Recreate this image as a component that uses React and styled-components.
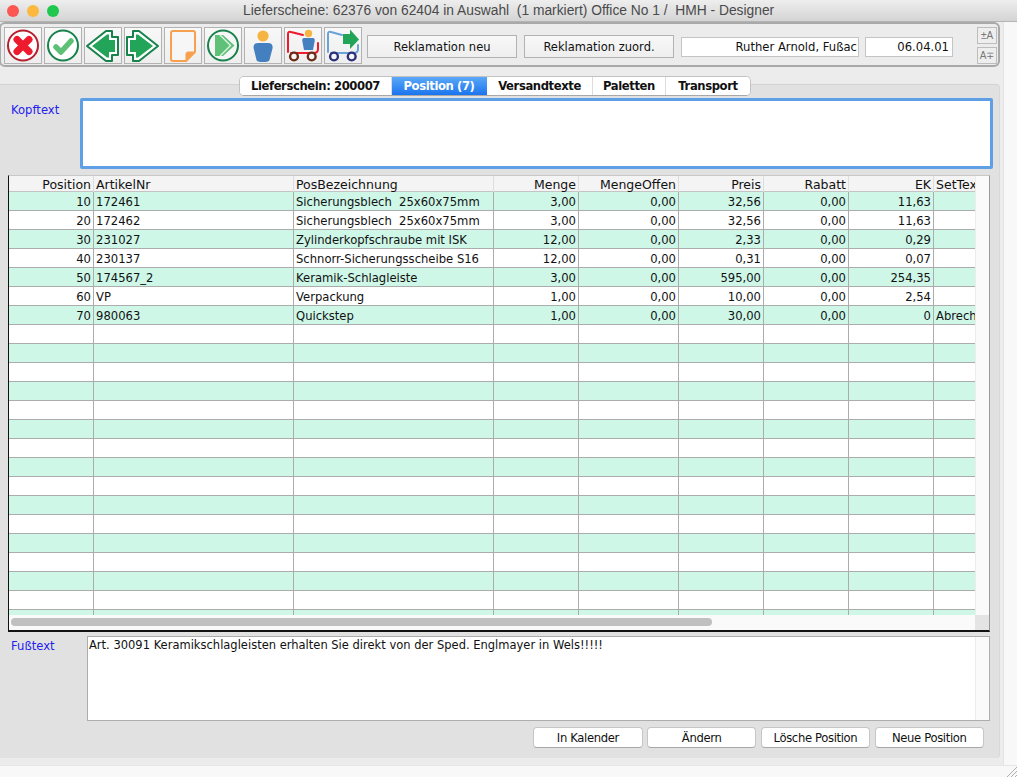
import styled, { createGlobalStyle } from 'styled-components'

const uiFont = `"DejaVu Sans", Verdana, sans-serif`

const GlobalStyle = createGlobalStyle`
  html, body {
    margin: 0;
    padding: 0;
    background: #f8f8f8;
  }
  * { box-sizing: border-box; }
`

const columns = [
  { title: 'Position', align: 'right' },
  { title: 'ArtikelNr', align: 'left' },
  { title: 'PosBezeichnung', align: 'left' },
  { title: 'Menge', align: 'right' },
  { title: 'MengeOffen', align: 'right' },
  { title: 'Preis', align: 'right' },
  { title: 'Rabatt', align: 'right' },
  { title: 'EK', align: 'right' },
  { title: 'SetText', align: 'left' },
]

const positions = [
  ['10', '172461', 'Sicherungsblech  25x60x75mm', '3,00', '0,00', '32,56', '0,00', '11,63', ''],
  ['20', '172462', 'Sicherungsblech  25x60x75mm', '3,00', '0,00', '32,56', '0,00', '11,63', ''],
  ['30', '231027', 'Zylinderkopfschraube mit ISK', '12,00', '0,00', '2,33', '0,00', '0,29', ''],
  ['40', '230137', 'Schnorr-Sicherungsscheibe S16', '12,00', '0,00', '0,31', '0,00', '0,07', ''],
  ['50', '174567_2', 'Keramik-Schlagleiste', '3,00', '0,00', '595,00', '0,00', '254,35', ''],
  ['60', 'VP', 'Verpackung', '1,00', '0,00', '10,00', '0,00', '2,54', ''],
  ['70', '980063', 'Quickstep', '1,00', '0,00', '30,00', '0,00', '0', 'Abrechnung'],
]

const emptyRow = ['', '', '', '', '', '', '', '', '']
const rows = [...positions, ...Array(16).fill(emptyRow)]

const tabs = [
  { label: 'Lieferschein: 200007', width: 152 },
  { label: 'Position (7)', width: 95, active: true },
  { label: 'Versandtexte', width: 106 },
  { label: 'Paletten', width: 73 },
  { label: 'Transport', width: 84 },
]

const arrowOuter = '3,19 22,4 28,4 28,10 34,10 34,28 28,28 28,34 22,34'
const arrowInner = '8,19 23,7.5 25,7.5 25,13 31,13 31,25 25,25 25,30.5 23,30.5'

// the svg starts inside the button border, so the viewBox keeps button coordinates
const ToolIcon = ({ children }) => (
  <svg width="36" height="35" viewBox="1 1 36 35">{children}</svg>
)

const CancelIcon = () => (
  <ToolIcon>
    <circle cx="19" cy="18.5" r="15" fill="#fff" stroke="#b5202f" strokeWidth="2" />
    <path d="M13 12.5 L25 24.5 M25 12.5 L13 24.5" stroke="#ee1b2e" strokeWidth="7" strokeLinecap="round" />
  </ToolIcon>
)

const OkIcon = () => (
  <ToolIcon>
    <circle cx="19" cy="18.5" r="15" fill="#fff" stroke="#17824c" strokeWidth="2" />
    <path d="M12 20 L17 25 L27 14" fill="none" stroke="#5cc076" strokeWidth="5.5" strokeLinecap="round" strokeLinejoin="round" />
  </ToolIcon>
)

const ArrowIcon = ({ flip }) => (
  <ToolIcon>
    <g transform={flip ? 'matrix(-1 0 0 1 37 0)' : undefined}>
      <polygon points={arrowOuter} fill="#fff" stroke="#17824c" strokeWidth="2" strokeLinejoin="round" />
      <polygon points={arrowInner} fill="#22a559" />
    </g>
  </ToolIcon>
)

const NoteIcon = () => (
  <ToolIcon>
    <path d="M9 4 H29 Q31 4 31 6 V25 L22 34 H9 Q7 34 7 32 V6 Q7 4 9 4 Z" fill="#f6f6f6" stroke="#f7a04e" strokeWidth="2" strokeLinejoin="round" />
    <path d="M31 25 L22 34 V27 Q22 25 24 25 Z" fill="#f7a04e" stroke="#f7a04e" strokeWidth="1" strokeLinejoin="round" />
  </ToolIcon>
)

const ForwardIcon = () => (
  <ToolIcon>
    <circle cx="19" cy="18.5" r="15" fill="#f6f6f6" stroke="#17824c" strokeWidth="2" />
    <polygon points="11,8 19,8 30.5,18.5 19,29 11,29" fill="#5fc178" />
    <path d="M16 8 L26.5 18.5 L16 29" fill="none" stroke="#e4f5e9" strokeWidth="1.3" />
  </ToolIcon>
)

const PersonIcon = () => (
  <ToolIcon>
    <circle cx="19" cy="9" r="5.6" fill="#f6b443" />
    <path d="M14 16 H24 Q29 16 28.6 21 L25.5 33 Q25 35 19 35 Q13 35 12.5 33 L9.6 21 Q9 16 14 16 Z" fill="#447fbf" />
  </ToolIcon>
)

const CartIcon = () => (
  <ToolIcon>
    <path d="M4 25 V7 Q4 4 7 5 L19 8 M34 16 V22 Q34 26 30 26 H7" fill="none" stroke="#ee1b2e" strokeWidth="2" strokeLinecap="round" />
    <circle cx="24.5" cy="6.5" r="3.7" fill="#f6b443" />
    <path d="M20 11 H29 Q31 11 30.7 14 L29 23 H20 L18.3 14 Q18 11 20 11 Z" fill="#447fbf" />
    <circle cx="10" cy="29.5" r="3.9" fill="#f6f6f6" stroke="#6b2a16" strokeWidth="2.4" />
    <circle cx="27.7" cy="29.5" r="3.9" fill="#f6f6f6" stroke="#6b2a16" strokeWidth="2.4" />
  </ToolIcon>
)

const ShipIcon = () => (
  <ToolIcon>
    <path d="M4 25 V7 Q4 4 7 5 L18 8 M34 18 V22 Q34 26 30 26 H7" fill="none" stroke="#6aa3da" strokeWidth="2" strokeLinecap="round" />
    <polygon points="19,7 26,7 26,2.5 35,12.5 26,22 26,17 19,17" fill="#22a559" />
    <circle cx="10" cy="29.5" r="3.9" fill="#f6f6f6" stroke="#2a2f78" strokeWidth="2.4" />
    <circle cx="27.7" cy="29.5" r="3.9" fill="#f6f6f6" stroke="#2a2f78" strokeWidth="2.4" />
  </ToolIcon>
)

const AppWindow = styled.div`
  width: 1017px;
  height: 777px;
  display: flex;
  flex-direction: column;
  background: #ececec;
  overflow: hidden;
  font-family: ${uiFont};
  font-size: 11.6px;
  color: #111;
`

const TitleBar = styled.div`
  height: 22px;
  flex: none;
  display: flex;
  align-items: center;
  padding-left: 7px;
  background: linear-gradient(#eeeeee, #d4d4d4);
  border-bottom: 1px solid #b4b4b4;
`

const Light = styled.span`
  width: 12px;
  height: 12px;
  margin-right: 8px;
  border-radius: 50%;
  background: ${p => p.$color};
`

const TitleText = styled.div`
  margin-left: 176px;
  font-family: "Liberation Sans", Arial, sans-serif;
  font-size: 13.8px;
  color: #4a4a4a;
  white-space: pre;
`

const Body = styled.div`
  flex: 1;
  min-height: 0;
  display: flex;
`

const Content = styled.div`
  width: 1003px;
  flex: none;
  display: flex;
  flex-direction: column;
`

const SideStrip = styled.div`
  flex: 1;
  background: #f8f8f8;
  border-left: 1px solid #e4e4e4;
`

const StatusBar = styled.div`
  height: 12px;
  flex: none;
  display: flex;
  justify-content: flex-end;
  background: #f8f8f8;
  border-top: 1px solid #e6e6e6;
`

const Toolbar = styled.div`
  width: 1001px;
  height: 45px;
  margin-left: -1px;
  flex: none;
  display: flex;
  align-items: flex-start;
  padding: 3px 0 0 3px;
  background: #ececec;
  border: 2px solid #a9a9a9;
  border-radius: 6px;
`

const IconButton = styled.button`
  width: 38px;
  height: 37px;
  flex: none;
  margin-right: 2px;
  padding: 0;
  display: block;
  background: linear-gradient(#f8f8f8, #eeeeee);
  border: 1px solid #b2b2b2;
  svg { display: block; overflow: visible; }
`

const ActionButton = styled.button`
  width: 150px;
  height: 23px;
  margin: 8px 0 0 ${p => p.$gap}px;
  padding: 0;
  flex: none;
  font-family: ${uiFont};
  font-size: 11.5px;
  color: #111;
  background: linear-gradient(#f8f8f8, #eeeeee);
  border: 1px solid #b2b2b2;
`

const ReadOnlyField = styled.div`
  width: ${p => p.$width}px;
  height: 20px;
  margin: 10px 0 0 ${p => p.$gap}px;
  flex: none;
  padding: 0 ${p => p.$pad}px 0 0;
  line-height: 18px;
  text-align: right;
  white-space: nowrap;
  background: #fff;
  border: 1px solid #c4c4c4;
`

const FontButtons = styled.div`
  margin-left: 24px;
  display: flex;
  flex-direction: column;
  gap: 3px;
`

const FontButton = styled.div`
  width: 20px;
  height: 17px;
  font-family: "Liberation Sans", Arial, sans-serif;
  font-size: 10px;
  line-height: 15px;
  text-align: center;
  color: #777;
  background: #eeeeee;
  border: 1px solid #bdbdbd;
`

const TabRow = styled.div`
  height: 20px;
  margin: 9px 0 0 239px;
  flex: none;
  display: flex;
  position: relative;
  z-index: 1;
  width: max-content;
  background: #fff;
  border: 1px solid #c2c2c2;
  border-bottom-color: #a8a8a8;
  border-radius: 5px;
  overflow: hidden;
`

const Tab = styled.div`
  width: ${p => p.$width}px;
  flex: none;
  line-height: 18px;
  text-align: center;
  font-weight: bold;
  font-size: 11.6px;
  letter-spacing: -0.4px;
  color: ${p => (p.$active ? '#fff' : '#111')};
  background: ${p => (p.$active ? 'linear-gradient(#5aa8f8, #1b74ee)' : '#fff')};
  border-right: 1px solid ${p => (p.$active ? 'transparent' : '#dcdcdc')};
  &:last-child { border-right: 0; }
`

const Panel = styled.div`
  flex: none;
  height: 674px;
  width: 1000px;
  margin-top: -12px;
  padding-top: 13px;
  background: #e1e1e1;
  border-top: 1px solid #d2d2d2;
  border-right: 1px solid #d8d8d8;
  border-radius: 0 4px 4px 0;
`

const TextRow = styled.div`
  display: flex;
  align-items: flex-start;
`

const FieldLabel = styled.div`
  width: ${p => p.$width}px;
  flex: none;
  padding: ${p => p.$top}px 0 0 11px;
  color: #2222ee;
`

const KopfBox = styled.div`
  width: 913px;
  height: 71px;
  background: #fff;
  border: 3px solid #5e9fe6;
  border-radius: 2px;
`

const FussBox = styled.div`
  width: 903px;
  height: 85px;
  display: flex;
  background: #fff;
  border: 1px solid #adadad;
`

const FussText = styled.div`
  flex: 1;
  padding: 1px 1px;
  font-size: 11.5px;
`

const ScrollTrack = styled.div`
  width: 14px;
  flex: none;
  background: #fafafa;
  border-left: 1px solid #ececec;
`

const TableFrame = styled.div`
  width: 982px;
  height: 457px;
  margin: 6px 0 4px 8px;
  display: grid;
  grid-template-columns: 966px 14px;
  grid-template-rows: 439px 15px;
  background: #fff;
  border-left: 1px solid #111;
  border-top: 1px solid #c8c8c8;
  border-right: 1px solid #9a9a9a;
  border-bottom: 2px solid #111;
`

const TableArea = styled.div`
  overflow: hidden;
`

const HeaderRow = styled.div`
  height: 16px;
  display: grid;
  grid-template-columns: 85px 200px 200px 85px 100px 85px 85px 85px 42px;
  background: #f4f4f4;
  border-bottom: 1px solid #c4c4c4;
`

const HeaderCell = styled.div`
  padding: 0 2px;
  font-size: 12.5px;
  line-height: 17px;
  text-align: ${p => p.$align};
  white-space: nowrap;
  overflow-x: clip;
  border-right: 1px solid #dddddd;
  &:last-child { border-right: 0; }
`

const DataRow = styled.div`
  height: 19px;
  display: grid;
  grid-template-columns: 85px 200px 200px 85px 100px 85px 85px 85px 42px;
  background: ${p => (p.$even ? '#cef7e8' : '#fff')};
  border-bottom: 1px solid #acacac;
`

const DataCell = styled.div`
  padding: 0 2px;
  line-height: 20px;
  text-align: ${p => p.$align};
  white-space: pre;
  overflow: hidden;
  border-right: 1px solid #acacac;
  &:last-child { border-right: 0; padding-right: 0; }
`

const VerticalTrack = styled.div`
  background: #fafafa;
  border-left: 1px solid #ececec;
`

const HorizontalTrack = styled.div`
  padding: 3px 0 0 2px;
  background: #fafafa;
`

const ScrollThumb = styled.div`
  width: 701px;
  height: 8px;
  background: #c0c0c0;
  border-radius: 4px;
`

const ScrollCorner = styled.div`
  background: #e4e4e4;
`

const ButtonRow = styled.div`
  width: 984px;
  margin-top: 6px;
  display: flex;
  justify-content: flex-end;
  gap: 4.3px;
`

const PillButton = styled.button`
  width: 109.5px;
  height: 21px;
  padding: 0;
  font-family: ${uiFont};
  font-size: 11.6px;
  letter-spacing: -0.35px;
  color: #111;
  background: #fff;
  border: 1px solid #c6c6c6;
  border-bottom-color: #a8a8a8;
  border-radius: 4px;
`

const ResizeGrip = () => (
  <svg width="12" height="11" viewBox="0 0 12 11">
    <path d="M2 11 L12 1 M6 11 L12 5 M10 11 L12 9" stroke="#b0b0b0" strokeWidth="1" />
  </svg>
)

export default function App() {
  return (
    <AppWindow>
      <GlobalStyle />
      <TitleBar>
        <Light $color="#fc5753" />
        <Light $color="#fdb83f" />
        <Light $color="#1fc74f" />
        <TitleText>Lieferscheine: 62376 von 62404 in Auswahl  (1 markiert) Office No 1 /  HMH - Designer</TitleText>
      </TitleBar>
      <Body>
        <Content>
          <Toolbar>
            <IconButton><CancelIcon /></IconButton>
            <IconButton><OkIcon /></IconButton>
            <IconButton><ArrowIcon /></IconButton>
            <IconButton><ArrowIcon flip /></IconButton>
            <IconButton><NoteIcon /></IconButton>
            <IconButton><ForwardIcon /></IconButton>
            <IconButton><PersonIcon /></IconButton>
            <IconButton><CartIcon /></IconButton>
            <IconButton><ShipIcon /></IconButton>
            <ActionButton $gap={3}>Reklamation neu</ActionButton>
            <ActionButton $gap={7}>Reklamation zuord.</ActionButton>
            <ReadOnlyField $width={178} $gap={7} $pad={1}>Ruther Arnold, Fußac</ReadOnlyField>
            <ReadOnlyField $width={88} $gap={6} $pad={3}>06.04.01</ReadOnlyField>
            <FontButtons>
              <FontButton>±A</FontButton>
              <FontButton>A∓</FontButton>
            </FontButtons>
          </Toolbar>
          <TabRow>
            {tabs.map(tab => (
              <Tab key={tab.label} $width={tab.width} $active={tab.active}>{tab.label}</Tab>
            ))}
          </TabRow>
          <Panel>
            <TextRow>
              <FieldLabel $width={80} $top={5}>Kopftext</FieldLabel>
              <KopfBox />
            </TextRow>
            <TableFrame>
              <TableArea>
                <HeaderRow>
                  {columns.map(col => (
                    <HeaderCell key={col.title} $align={col.align}>{col.title}</HeaderCell>
                  ))}
                </HeaderRow>
                {rows.map((row, i) => (
                  <DataRow key={i} $even={i % 2 === 0}>
                    {row.map((value, c) => (
                      <DataCell key={c} $align={columns[c].align}>{value}</DataCell>
                    ))}
                  </DataRow>
                ))}
              </TableArea>
              <VerticalTrack />
              <HorizontalTrack><ScrollThumb /></HorizontalTrack>
              <ScrollCorner />
            </TableFrame>
            <TextRow>
              <FieldLabel $width={87} $top={3}>Fußtext</FieldLabel>
              <FussBox>
                <FussText>Art. 30091 Keramikschlagleisten erhalten Sie direkt von der Sped. Englmayer in Wels!!!!!</FussText>
                <ScrollTrack />
              </FussBox>
            </TextRow>
            <ButtonRow>
              <PillButton>In Kalender</PillButton>
              <PillButton>Ändern</PillButton>
              <PillButton>Lösche Position</PillButton>
              <PillButton>Neue Position</PillButton>
            </ButtonRow>
          </Panel>
        </Content>
        <SideStrip />
      </Body>
      <StatusBar><ResizeGrip /></StatusBar>
    </AppWindow>
  )
}
